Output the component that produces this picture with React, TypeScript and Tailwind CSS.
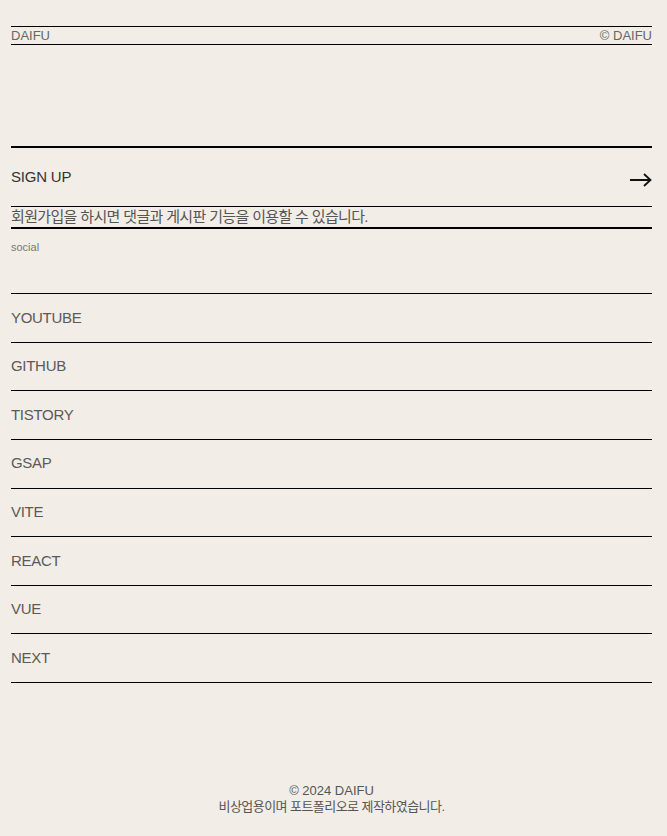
const socials = ["YOUTUBE", "GITHUB", "TISTORY", "GSAP", "VITE", "REACT", "VUE", "NEXT"];

function ArrowIcon() {
  return (
    <svg width="22" height="14" viewBox="0 0 22 14" fill="none">
      <path d="M0 7H20.5M14 1L20.5 7L14 13" stroke="#111" strokeWidth="1.8" />
    </svg>
  );
}

export default function App() {
  return (
    <div
      className="min-h-[836px] bg-[#f2ede7] pl-[11px] pr-[15px] pt-[26px] text-[#555]"
      style={{ fontFamily: '"Liberation Sans", "Noto Sans CJK KR", sans-serif' }}
    >
      <header className="flex h-[19px] items-center justify-between border-y border-black text-[13px] leading-none text-[#666]">
        <span>DAIFU</span>
        <span>© DAIFU</span>
      </header>

      <section className="mt-[101px]">
        <div className="flex h-[60px] items-center justify-between border-t-2 border-black">
          <span className="pt-[1px] text-[15px] tracking-[-0.2px] text-[#333]">SIGN UP</span>
          <span className="pt-[5px]">
            <ArrowIcon />
          </span>
        </div>
        <div className="flex h-[23px] items-center border-y border-black border-b-2 text-[15px] tracking-[-0.65px] text-[#555]">
          회원가입을 하시면 댓글과 게시판 기능을 이용할 수 있습니다.
        </div>
        <p className="pt-[11px] text-[11px] leading-[14px] text-[#777]">social</p>
      </section>

      <ul className="mt-[39px] border-t border-black">
        {socials.map((s) => (
          <li
            key={s}
            className="flex h-[48.625px] items-center border-b border-black text-[15px] tracking-[-0.3px] text-[#5a5a5a]"
          >
            {s}
          </li>
        ))}
      </ul>

      <footer className="flex flex-col items-center pt-[100px] pb-[22px] text-[13px] leading-[16px] text-[#555]">
        <span>© 2024 DAIFU</span>
        <span className="tracking-[-0.55px]">비상업용이며 포트폴리오로 제작하였습니다.</span>
      </footer>
    </div>
  );
}
